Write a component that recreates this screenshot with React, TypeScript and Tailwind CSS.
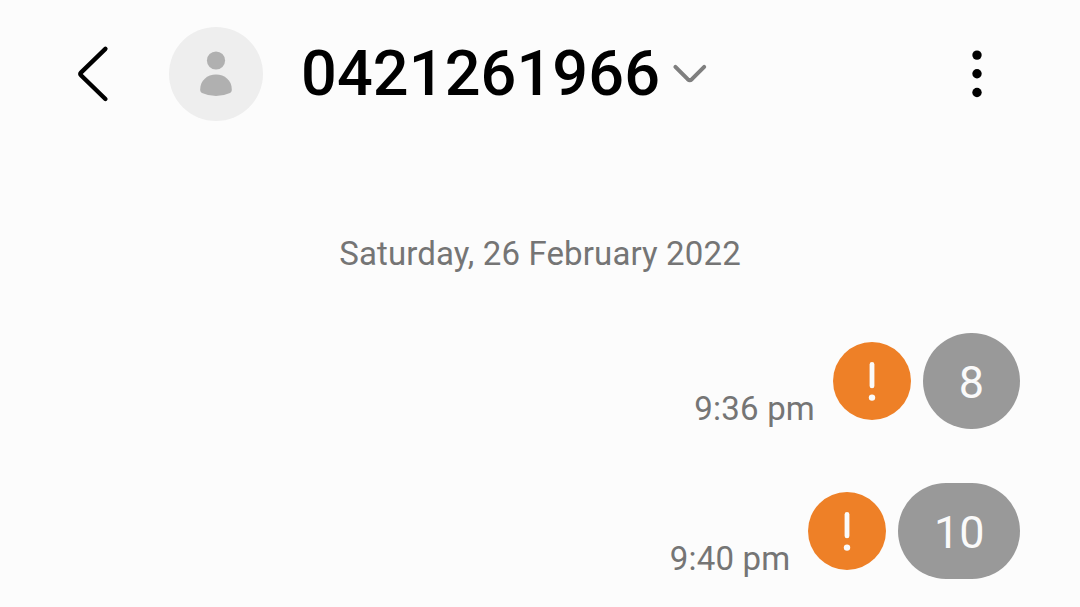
type Message = {
  id: number;
  time: string;
  text: string;
};

const messages: Message[] = [
  { id: 1, time: "9:36 pm", text: "8" },
  { id: 2, time: "9:40 pm", text: "10" },
];

const Header = () => (
  <header className="flex h-[147px] items-center pl-[76px] pr-[80px]">
    <button aria-label="Back">
      <svg width="34" height="60" viewBox="0 0 34 60" fill="none">
        <path
          d="M29.4 4.9 5.2 28.3Q3.6 29.9 5.2 31.5L29.4 55"
          stroke="#000"
          strokeWidth="4.4"
          strokeLinecap="round"
          strokeLinejoin="round"
        />
      </svg>
    </button>

    {/* Contact avatar */}
    <div className="ml-[59px] h-[94px] w-[94px] shrink-0 rounded-full bg-[#eeeeee]">
      <svg width="94" height="94" viewBox="0 0 94 94" fill="#b0b0b0">
        <circle cx="47" cy="33.5" r="9.1" />
        <path d="M31.2 62.5C31.2 53.5 38.2 47.5 47 47.5S62.8 53.5 62.8 62.5C62.8 64 62.5 65.3 61 66Q54.5 69 47 69T33 66C31.5 65.3 31.2 64 31.2 62.5Z" />
      </svg>
    </div>

    <button className="ml-[38px] flex items-center">
      <span className="text-[63px] leading-[74px] font-medium tracking-[0.1px] text-black">
        0421261966
      </span>
      <svg className="ml-[12px]" width="36" height="24" viewBox="0 0 36 24" fill="none">
        <path
          d="M3.4 4.8 15.7 17.2Q17.8 19.2 19.9 17.2L32.2 4.8"
          stroke="#7f7f7f"
          strokeWidth="4"
          strokeLinecap="round"
          strokeLinejoin="round"
        />
      </svg>
    </button>

    <button aria-label="More options" className="ml-auto">
      <svg width="46" height="60" viewBox="0 0 46 60" fill="#000">
        <circle cx="23" cy="11.1" r="4.7" />
        <circle cx="23" cy="29.8" r="4.7" />
        <circle cx="23" cy="48.5" r="4.7" />
      </svg>
    </button>
  </header>
);

const FailedBadge = () => (
  <svg width="78" height="78" viewBox="0 0 78 78" aria-label="Not sent">
    <circle cx="39" cy="39" r="39" fill="#ee8027" />
    <path d="M39 22.4V43.9" stroke="#fafafa" strokeWidth="4.8" strokeLinecap="round" />
    <circle cx="39" cy="55.6" r="3.2" fill="#fafafa" />
  </svg>
);

const MessageRow = ({ message }: { message: Message }) => (
  <li className="flex h-24 items-center justify-end">
    <span className="mr-[18px] self-end text-[33px] leading-[40px] tracking-[0.2px] text-[#757575]">
      {message.time}
    </span>
    <FailedBadge />
    <div className="ml-3 flex h-24 min-w-[97px] items-center justify-center rounded-[48px] bg-[#999999] px-[35.5px] pt-[3px] text-[45px] leading-[52px] text-[#fafafa]">
      {message.text}
    </div>
  </li>
);

const App = () => (
  <div className="h-[607px] w-full overflow-hidden bg-[#fcfcfc] font-['Roboto',sans-serif]">
    <Header />
    <main className="pr-[60px]">
      <p className="pt-[87px] pl-[60px] text-center text-[33px] leading-[40px] tracking-[0.13px] text-[#757575]">
        Saturday, 26 February 2022
      </p>
      <ul className="mt-[59px] flex flex-col gap-[54px]">
        {messages.map((message) => (
          <MessageRow key={message.id} message={message} />
        ))}
      </ul>
    </main>
  </div>
);

export default App;
